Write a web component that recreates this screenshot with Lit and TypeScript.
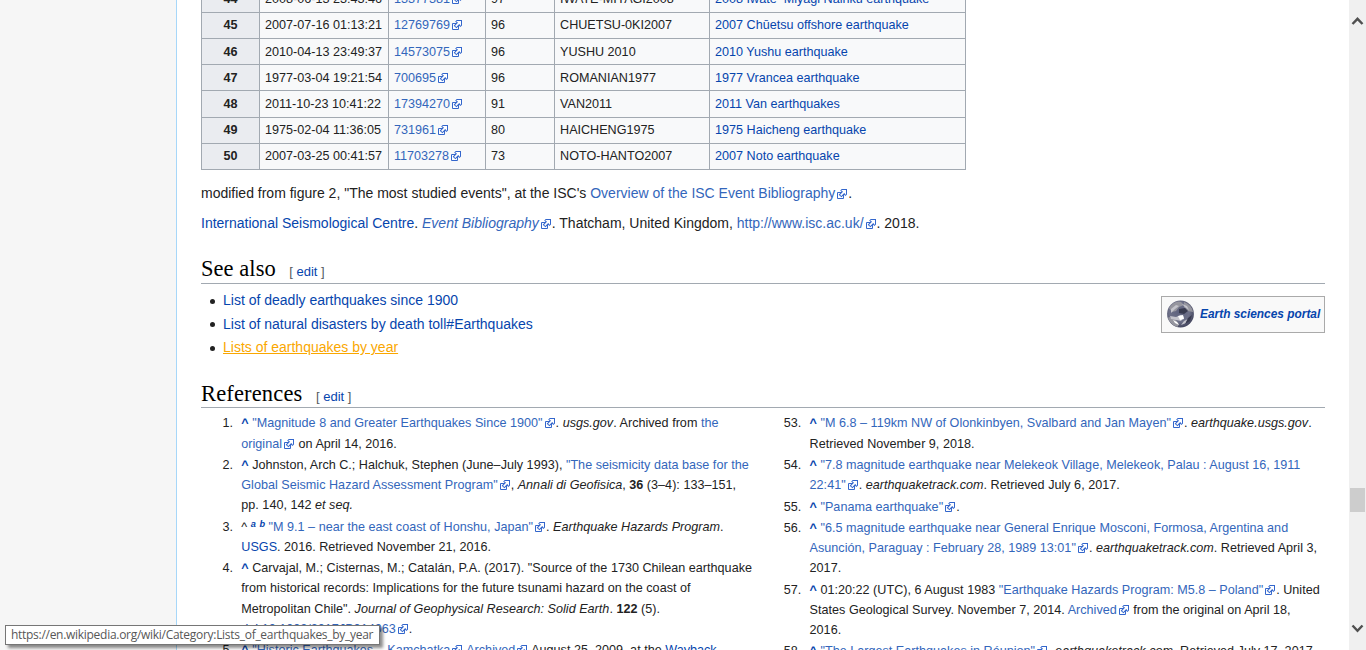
import { LitElement, html, svg, css } from "lit";
import { customElement } from "lit/decorators.js";

const mark = html`<svg class="ext-icon" width="12" height="12" viewBox="0 0 12 12">
  ${svg`<path fill="#fff" stroke="#36c" d="M1.5 4.518h5.982V10.5H1.5z"/>
  <path fill="#36c" d="M5.765 1H11v5.39L9.427 7.937l-1.31-1.31L5.393 9.35l-2.69-2.688 2.81-2.808L4.2 2.544z"/>
  <path fill="#fff" d="m9.995 2.004.022 4.885L8.2 5.07 5.32 7.95 4.09 6.723l2.882-2.88-1.85-1.852z"/>`}
</svg>`;

const ext = (t: unknown) => html`<a class="ext">${t}${mark}</a>`;
const part = (t: unknown) => html`<a class="ext">${t}</a>`;
const up = html`<a class="up">^</a>`;
const br = html`<br />`;

const events = [
  ["44", "2008-06-13 23:43:46", "13377381", "97", "IWATE-MIYAGI2008", "2008 Iwate–Miyagi Nairiku earthquake"],
  ["45", "2007-07-16 01:13:21", "12769769", "96", "CHUETSU-0KI2007", "2007 Chūetsu offshore earthquake"],
  ["46", "2010-04-13 23:49:37", "14573075", "96", "YUSHU 2010", "2010 Yushu earthquake"],
  ["47", "1977-03-04 19:21:54", "700695", "96", "ROMANIAN1977", "1977 Vrancea earthquake"],
  ["48", "2011-10-23 10:41:22", "17394270", "91", "VAN2011", "2011 Van earthquakes"],
  ["49", "1975-02-04 11:36:05", "731961", "80", "HAICHENG1975", "1975 Haicheng earthquake"],
  ["50", "2007-03-25 00:41:57", "11703278", "73", "NOTO-HANTO2007", "2007 Noto earthquake"],
];

const left: [number, unknown][] = [
  [1, html`${up} ${ext('"Magnitude 8 and Greater Earthquakes Since 1900"')}. <i>usgs.gov</i>. Archived from ${part("the")}${br}${ext("original")} on April 14, 2016.`],
  [2, html`${up} Johnston, Arch C.; Halchuk, Stephen (June–July 1993), ${part('"The seismicity data base for the')}${br}${ext('Global Seismic Hazard Assessment Program"')}, <i>Annali di Geofisica</i>, <b>36</b> (3–4): 133–151,${br}pp. 140, 142 <i>et seq.</i>`],
  [3, html`^ <sup><a>a</a></sup> <sup><a>b</a></sup> ${ext('"M 9.1 – near the east coast of Honshu, Japan"')}. <i>Earthquake Hazards Program</i>.${br}<a>USGS</a>. 2016. Retrieved November 21, 2016.`],
  [4, html`${up} Carvajal, M.; Cisternas, M.; Catalán, P.A. (2017). "Source of the 1730 Chilean earthquake${br}from historical records: Implications for the future tsunami hazard on the coast of${br}Metropolitan Chile". <i>Journal of Geophysical Research: Solid Earth</i>. <b>122</b> (5).${br}<a>doi</a>:${ext("10.1002/2017JB014063")}.`],
  [5, html`${up} ${ext('"Historic Earthquakes – Kamchatka')} ${ext("Archived")} August 25, 2009, at the <a>Wayback</a>`],
];

const right: [number, unknown][] = [
  [53, html`${up} ${ext('"M 6.8 – 119km NW of Olonkinbyen, Svalbard and Jan Mayen"')}. <i>earthquake.usgs.gov</i>.${br}Retrieved November 9, 2018.`],
  [54, html`${up} ${part('"7.8 magnitude earthquake near Melekeok Village, Melekeok, Palau : August 16, 1911')}${br}${ext('22:41"')}. <i>earthquaketrack.com</i>. Retrieved July 6, 2017.`],
  [55, html`${up} ${ext('"Panama earthquake"')}.`],
  [56, html`${up} ${part('"6.5 magnitude earthquake near General Enrique Mosconi, Formosa, Argentina and')}${br}${ext('Asunción, Paraguay : February 28, 1989 13:01"')}. <i>earthquaketrack.com</i>. Retrieved April 3,${br}2017.`],
  [57, html`${up} 01:20:22 (UTC), 6 August 1983 ${ext('"Earthquake Hazards Program: M5.8 – Poland"')}. United${br}States Geological Survey. November 7, 2014. ${ext("Archived")} from the original on April 18,${br}2016.`],
  [58, html`${up} ${ext('"The Largest Earthquakes in Réunion"')}. <i>earthquaketrack.com</i>. Retrieved July 17, 2017.`],
];

@customElement("app-root")
export class AppRoot extends LitElement {
  static styles = css`
    :host {
      display: block;
      position: relative;
      width: 1366px;
      height: 650px;
      overflow: hidden;
      background: #fff;
      color: #222;
      font: 14px/22.4px "Liberation Sans", Arial, sans-serif;
      white-space: nowrap;
    }
    .page { display: flex; height: 650px; }
    .side { width: 176px; flex: none; background: #f6f6f6; border-right: 1px solid #a7d7f9; }
    .content { flex: none; width: 1124px; padding: 0 24px; overflow: hidden; }
    a { color: #0645ad; text-decoration: none; }
    .ext { color: #36b; }
    .ext-icon { margin-left: 1px; vertical-align: -2px; }
    .events { width: 765px; margin-top: -14.21px; font-size: 12.6px; line-height: 20.16px; background: #f8f9fa; border-bottom: 1px solid #a2a9b1; box-sizing: border-box; height: 184.15px; }
    .row { display: grid; grid-template-columns: 58px 129px 97px 69px 155px 257px; height: 26.16px; }
    .cell { border-top: 1px solid #a2a9b1; border-left: 1px solid #a2a9b1; padding: 2.52px 5.04px; box-sizing: border-box; }
    .cell:first-child { background: #eaecf0; text-align: center; font-weight: bold; }
    .cell:last-child { border-right: 1px solid #a2a9b1; }
    .para { margin: 0; padding-top: 12px; }
    .para + .para { padding-top: 7.6px; }
    .head { display: flex; align-items: baseline; margin: 0; border-bottom: 1px solid #a2a9b1; box-sizing: border-box; color: #000; font: 22.5px/28px "Liberation Serif", Georgia, serif; }
    .head.see { height: 33px; margin-top: 16.6px; padding-top: 4px; }
    .head.refs { height: 32px; padding-top: 4px; }
    .title { letter-spacing: 0.05px; }
    .refs .title { letter-spacing: 0.15px; }
    .edit { margin-left: 13.5px; font: 13px/20px "Liberation Sans", Arial, sans-serif; color: #54595d; }
    .see-row { display: flex; justify-content: space-between; align-items: flex-start; height: 92px; }
    .links { list-style: none; margin: 0; padding: 4.9px 0 0; }
    .links li { display: flex; align-items: center; margin-bottom: 1.4px; }
    .dot { width: 5px; height: 5px; border-radius: 50%; background: #222; margin: 2px 8px 0 9px; }
    .hover { color: #faa700; text-decoration: underline; }
    .portal { display: flex; align-items: center; gap: 5px; box-sizing: border-box; width: 164px; height: 37px; margin-top: 12px; padding: 0 0 0 5px; background: #f9f9f9; border: 1px solid #aaa; font: italic bold 11.9px/14px "Liberation Sans", Arial, sans-serif; }
    .cols { display: flex; gap: 12.6px; padding-top: 5.5px; font-size: 12.6px; line-height: 20.16px; letter-spacing: 0.015px; }
    .col { width: 555.7px; }
    .ref { display: flex; margin-bottom: 1.26px; }
    .num { width: 32px; margin-right: 8.3px; text-align: right; }
    .up { font-weight: bold; }
    sup { font-size: 9.2px; line-height: 1; font-style: italic; font-weight: bold; vertical-align: 4px; }
    .scroll { display: flex; flex-direction: column; width: 17px; margin-left: auto; background: #f0f0f0; align-items: center; }
    .thumb { width: 15px; height: 24px; background: #cdcdcd; margin-top: 462px; }
    .arrow-up { margin-top: 15px; }
    .arrow-down { margin-top: 109px; }
    .status { position: absolute; left: 5px; top: 625px; width: 375px; height: 20px; box-sizing: border-box; padding-left: 5px; border: 1px solid #767676; background: #fff; color: #575757; box-shadow: 3px 3px 3px rgba(0, 0, 0, 0.45); font: 12px/18px "Open Sans", "Noto Sans", sans-serif; letter-spacing: -0.285px; }
  `;

  private list(items: [number, unknown][]) {
    return html`<div class="col">${items.map(([n, c]) => html`<div class="ref"><div class="num">${n}.</div><div>${c}</div></div>`)}</div>`;
  }

  private edit() {
    return html`<span class="edit">[ <a>edit</a> ]</span>`;
  }

  render() {
    return html`
      <div class="page">
        <div class="side"></div>
        <div class="content">
          <div class="events">
            ${events.map((r) => html`<div class="row"><div class="cell">${r[0]}</div><div class="cell">${r[1]}</div><div class="cell">${ext(r[2])}</div><div class="cell">${r[3]}</div><div class="cell">${r[4]}</div><div class="cell"><a>${r[5]}</a></div></div>`)}
          </div>
          <p class="para">modified from figure 2, "The most studied events", at the ISC's ${ext("Overview of the ISC Event Bibliography")}.</p>
          <p class="para"><a>International Seismological Centre</a>. <i>${ext("Event Bibliography")}</i>. Thatcham, United Kingdom, ${ext("http://www.isc.ac.uk/")}. 2018.</p>
          <h2 class="head see"><span class="title">See also</span>${this.edit()}</h2>
          <div class="see-row">
            <ul class="links">
              <li><span class="dot"></span><a>List of deadly earthquakes since 1900</a></li>
              <li><span class="dot"></span><a>List of natural disasters by death toll#Earthquakes</a></li>
              <li><span class="dot"></span><a class="hover">Lists of earthquakes by year</a></li>
            </ul>
            <div class="portal">
              <svg width="28" height="28" viewBox="0 0 28 28">
                <defs>
                  <radialGradient id="globe" cx="45%" cy="42%" r="58%">
                    <stop offset="0" stop-color="#5d617d" /><stop offset=".65" stop-color="#6d7088" /><stop offset="1" stop-color="#464861" />
                  </radialGradient>
                  <clipPath id="disc"><circle cx="13.5" cy="14" r="13.2" /></clipPath>
                  <filter id="soft"><feGaussianBlur stdDeviation=".7" /></filter>
                </defs>
                <circle cx="13.5" cy="14" r="13.4" fill="url(#globe)" />
                <g clip-path="url(#disc)"><g filter="url(#soft)">
                  <path fill="#96969f" d="M2 8Q8 0 14 2L17 5 12 7 9 11 5 12zM17 2Q25 5 26 12L21 11 17 7zM2 17l6 2 4 5-2 4Q3 24 1 18z" />
                  <path fill="#c4c4cc" d="M4 9l5-4 3 1-4 3-4 4zM15 4l5 2 2 4-4-3zM3 16l6 1 5-2 3 2-3 4-5-1-5-1zM17 21l4-2-2 4-5 2z" />
                  <path fill="#fff" d="M11 16l5-1 1 4-4 1zM6 20l4 2 2 3-4-2z" />
                  <path fill="#393b50" d="M12 9l6-1 3 3-4 3-5-1zM21 18l4-3-2 6-5 3z" />
                </g></g>
              </svg>
              <a>Earth sciences portal</a>
            </div>
          </div>
          <h2 class="head refs"><span class="title">References</span>${this.edit()}</h2>
          <div class="cols">${this.list(left)}${this.list(right)}</div>
        </div>
        <div class="scroll">
          <svg class="arrow-up" width="13" height="11" viewBox="0 0 13 11"><path d="M1.5 9L6.5 3.8 11.5 9" fill="none" stroke="#505050" stroke-width="2.4" /></svg>
          <div class="thumb"></div>
          <svg class="arrow-down" width="13" height="14" viewBox="0 0 13 14"><path d="M1.5 4.5L6.5 9.8 11.5 4.5" fill="none" stroke="#505050" stroke-width="2.4" /></svg>
        </div>
      </div>
      <div class="status">https://en.wikipedia.org/wiki/Category:Lists_of_earthquakes_by_year</div>
    `;
  }
}
